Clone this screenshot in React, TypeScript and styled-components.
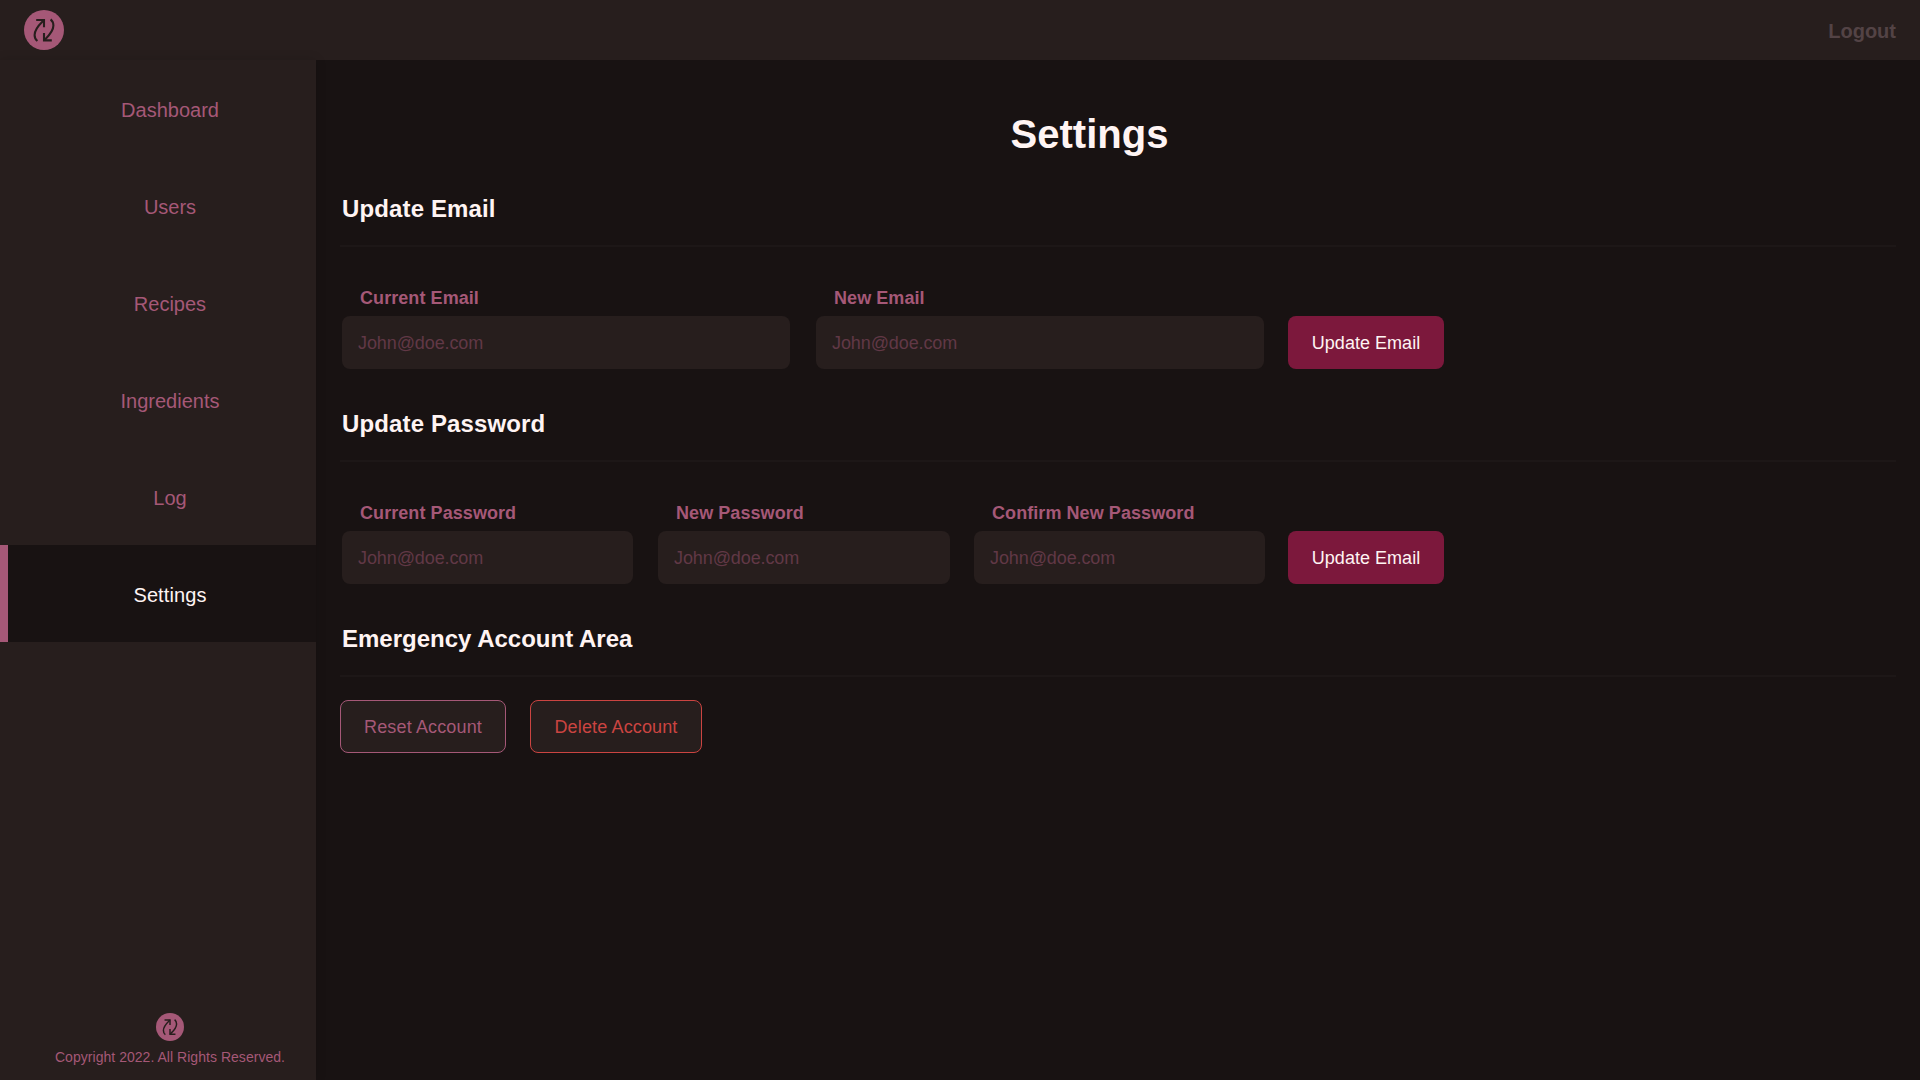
import React from "react";
import styled, { createGlobalStyle, css } from "styled-components";

const color = {
  page: "#181212",
  panel: "#271e1d",
  line: "#1d1717",
  accent: "#a55877",
  primary: "#7c183c",
  text: "#fff4f3",
  muted: "#534345",
  placeholder: "#613846",
  danger: "#cb4441",
};

const GlobalStyle = createGlobalStyle`
  *, *::before, *::after { box-sizing: border-box; }
  body {
    margin: 0;
    background: ${color.page};
    color: ${color.text};
    font-family: "Liberation Sans", Arial, sans-serif;
  }
`;

const Shell = styled.div`
  display: grid;
  grid-template: 60px 1fr / 316px 1fr;
  height: 100vh;
  overflow: hidden;
`;

const Header = styled.header`
  grid-column: 1 / -1;
  display: flex;
  align-items: center;
  justify-content: space-between;
  padding: 0 24px;
  background: ${color.panel};
`;

const Logout = styled.a`
  color: ${color.muted};
  font-size: 20px;
  font-weight: 700;
  line-height: 24px;
  padding-top: 2px;
`;

const Sidebar = styled.aside`
  display: flex;
  flex-direction: column;
  justify-content: space-between;
  background: ${color.panel};
  box-shadow: 0 0 10px rgba(0, 0, 0, 0.15);
`;

const Nav = styled.nav`
  display: flex;
  flex-direction: column;
`;

const NavItem = styled.a<{ $active?: boolean }>`
  display: flex;
  align-items: center;
  justify-content: center;
  height: 97px;
  padding: 3px 0 0 16px;
  border-left: 8px solid transparent;
  font-size: 20px;
  color: ${color.accent};
  ${(p) =>
    p.$active &&
    css`
      border-left-color: ${color.accent};
      background: ${color.page};
      color: ${color.text};
      letter-spacing: 0.1px;
    `}
`;

const Footer = styled.footer`
  display: flex;
  flex-direction: column;
  align-items: center;
  gap: 8px;
  padding: 0 0 15px 24px;
  color: ${color.accent};
  font-size: 14px;
  line-height: 16px;
  letter-spacing: 0.035px;
`;

const Main = styled.main`
  padding: 50px 24px 0;
`;

const Title = styled.h1`
  width: 1499px;
  margin: 0;
  text-align: center;
  font-size: 40px;
  line-height: 48px;
`;

const Section = styled.section<{ $first?: boolean }>`
  margin-top: ${(p) => (p.$first ? 37 : 41)}px;
`;

const SectionTitle = styled.h2<{ $tracking?: number }>`
  height: 52px;
  margin: 0;
  padding-left: 2px;
  border-bottom: 2px solid ${color.line};
  font-size: 24px;
  line-height: 28px;
  letter-spacing: ${(p) => p.$tracking ?? 0}px;
`;

const Form = styled.form`
  display: flex;
  align-items: flex-end;
  padding: 40px 0 0 2px;
`;

const Field = styled.label<{ $width: number; $gap: number }>`
  display: flex;
  flex-direction: column;
  gap: 7px;
  width: ${(p) => p.$width}px;
  margin-right: ${(p) => p.$gap}px;
`;

const FieldName = styled.span`
  padding-left: 18px;
  color: ${color.accent};
  font-size: 18px;
  font-weight: 700;
  line-height: 22px;
  letter-spacing: 0.07px;
`;

const Input = styled.input`
  width: 100%;
  height: 53px;
  padding: 1px 16px 0;
  border: 0;
  border-radius: 8px;
  outline: 0;
  background: ${color.panel};
  color: ${color.text};
  font: 18px "Liberation Sans", Arial, sans-serif;
  letter-spacing: -0.1px;
  &::placeholder {
    color: ${color.placeholder};
    opacity: 1;
  }
`;

const Button = styled.button<{ $width: number; $tone?: string }>`
  width: ${(p) => p.$width}px;
  height: 53px;
  padding: 1px 0 0;
  border: ${(p) => (p.$tone ? `1px solid ${p.$tone}` : "0")};
  border-radius: 8px;
  background: ${(p) => (p.$tone ? color.panel : color.primary)};
  color: ${(p) => p.$tone ?? color.text};
  font: 18px "Liberation Sans", Arial, sans-serif;
  letter-spacing: ${(p) => (p.$tone ? 0.14 : 0.03)}px;
  white-space: nowrap;
`;

const Actions = styled.div`
  display: flex;
  gap: 24px;
  padding-top: 23px;
`;

const LogoSvg = styled.svg`
  display: block;
  flex: none;
`;

function Logo({ size }: { size: number }) {
  return (
    <LogoSvg width={size} height={size} viewBox="0 0 40 40" fill="none" aria-hidden>
      <circle cx="20" cy="20" r="20" fill={color.accent} />
      <g stroke={color.panel} strokeWidth="2.1">
        <path d="M12.2 10H20V17.2" />
        <path d="M19.8 10.2C16 14 10.6 18.5 10.6 25C10.6 27.6 11.5 29.6 13.4 31" />
        <path d="M27.800 30.400H20V23" />
        <path d="M20.2 30.2C24 26.5 29.4 22 29.4 15.6C29.4 13 28.4 10.9 26.6 9.4" />
      </g>
    </LogoSvg>
  );
}

const pages = ["Dashboard", "Users", "Recipes", "Ingredients", "Log", "Settings"];

function TextField(props: { name: string; width: number; gap: number }) {
  return (
    <Field $width={props.width} $gap={props.gap}>
      <FieldName>{props.name}</FieldName>
      <Input placeholder="John@doe.com" />
    </Field>
  );
}

export default function App() {
  return (
    <>
      <GlobalStyle />
      <Shell>
        <Header>
          <Logo size={40} />
          <Logout>Logout</Logout>
        </Header>
        <Sidebar>
          <Nav>
            {pages.map((page) => (
              <NavItem key={page} $active={page === "Settings"}>
                {page}
              </NavItem>
            ))}
          </Nav>
          <Footer>
            <Logo size={28} />
            <span>Copyright 2022. All Rights Reserved.</span>
          </Footer>
        </Sidebar>
        <Main>
          <Title>Settings</Title>
          <Section $first>
            <SectionTitle $tracking={0.13}>Update Email</SectionTitle>
            <Form>
              <TextField name="Current Email" width={448} gap={26} />
              <TextField name="New Email" width={448} gap={24} />
              <Button type="button" $width={156}>Update Email</Button>
            </Form>
          </Section>
          <Section>
            <SectionTitle $tracking={0.13}>Update Password</SectionTitle>
            <Form>
              <TextField name="Current Password" width={291} gap={25} />
              <TextField name="New Password" width={292} gap={24} />
              <TextField name="Confirm New Password" width={291} gap={23} />
              <Button type="button" $width={156}>Update Email</Button>
            </Form>
          </Section>
          <Section>
            <SectionTitle>Emergency Account Area</SectionTitle>
            <Actions>
              <Button $width={166} $tone={color.accent}>Reset Account</Button>
              <Button $width={172} $tone={color.danger}>Delete Account</Button>
            </Actions>
          </Section>
        </Main>
      </Shell>
    </>
  );
}
